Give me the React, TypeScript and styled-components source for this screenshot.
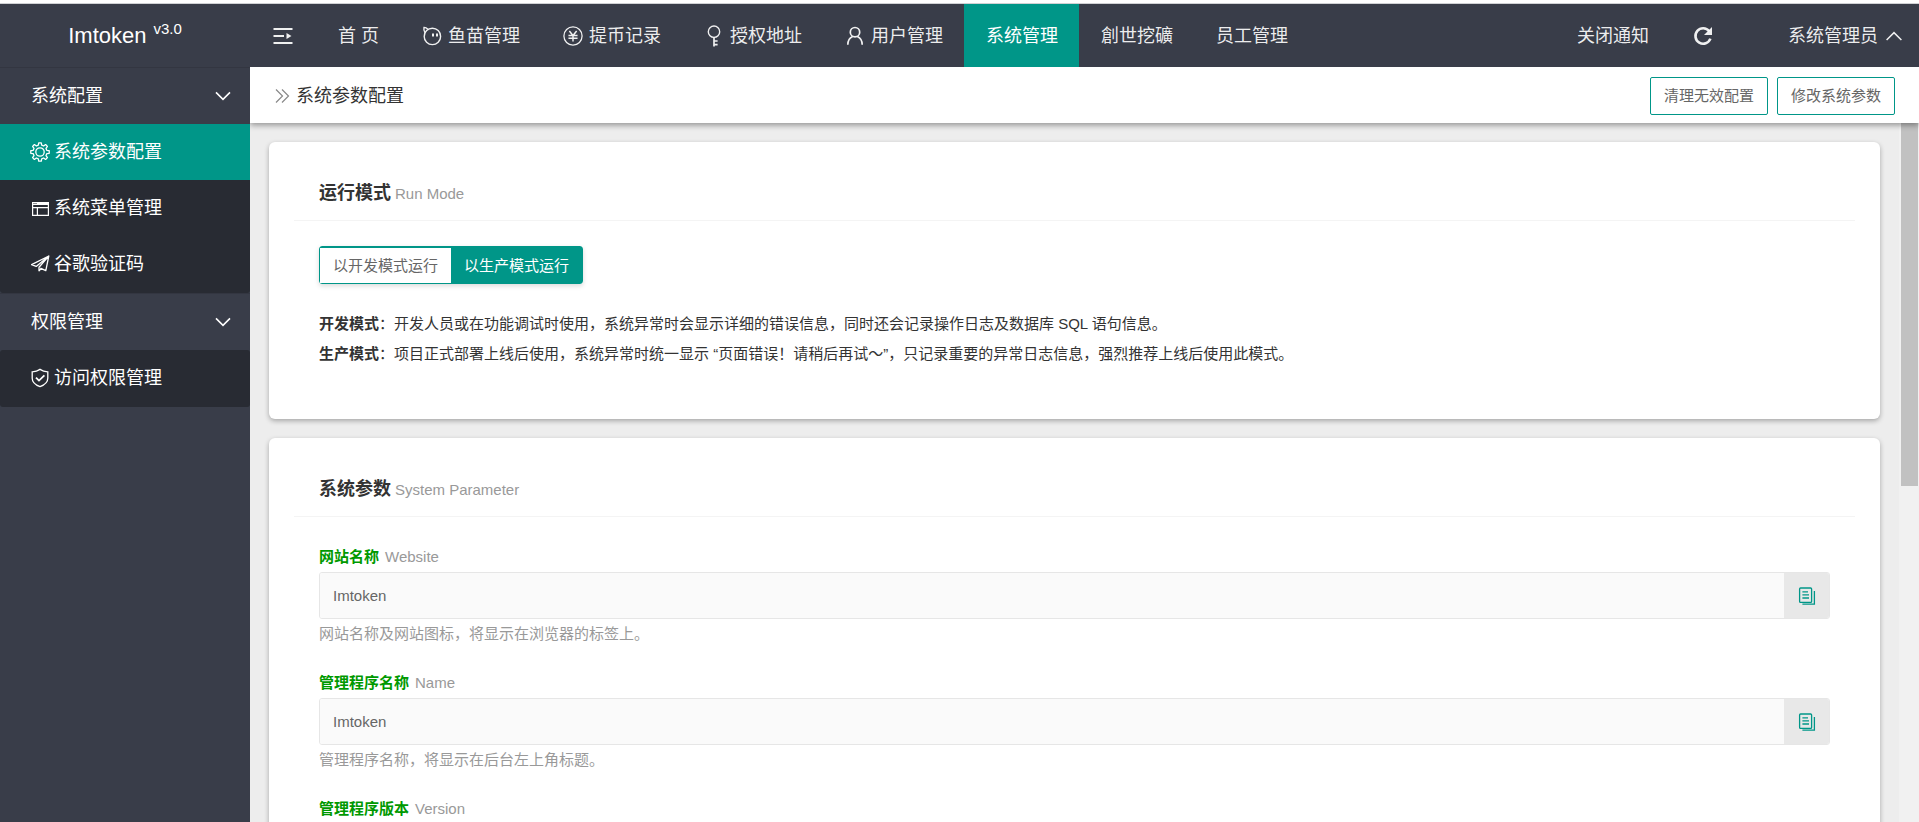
import React from "react";
import styled, { createGlobalStyle, css } from "styled-components";

const color = {
  dark: "#393d49",
  darker: "#282b33",
  teal: "#009688",
  green: "#009900",
  muted: "#999",
};

const GlobalStyle = createGlobalStyle`
  *, *::before, *::after { box-sizing: border-box; }
  body {
    margin: 0;
    font: 15px/30px "Liberation Sans", "Noto Sans CJK SC", sans-serif;
    color: #333;
    background: #fff;
  }
  h1, h2, p { margin: 0; font-weight: 400; }
  a { color: inherit; text-decoration: none; }
  button, input { font: inherit; color: inherit; margin: 0; }
  button { cursor: pointer; }
`;

const Shell = styled.div`
  height: 100vh;
  padding-top: 3px;
  display: flex;
  flex-direction: column;
  overflow: hidden;
`;

const Header = styled.header`
  flex: none;
  height: 64px;
  display: flex;
  border-top: 1px solid #d0d1d4;
  background: ${color.dark};
  color: rgba(255, 255, 255, 0.92);
  font-size: 18px;
`;

const Brand = styled.a`
  flex: none;
  width: 250px;
  display: flex;
  justify-content: center;
  align-items: center;
  gap: 7px;
  color: #fff;
  font-size: 22px;
`;

const Version = styled.sup`
  font-size: 15px;
  line-height: 20px;
  padding-bottom: 14px;
`;

const Nav = styled.nav`
  flex: 1;
  display: flex;
`;

const NavSide = styled.div`
  display: flex;
  align-items: stretch;
`;

const navItem = css`
  display: flex;
  align-items: center;
  gap: 6px;
  padding: 0 21px 0 22px;
  white-space: nowrap;
`;

const NavLink = styled.a<{ $active?: boolean }>`
  ${navItem}
  ${(p) => p.$active && css`background: ${color.teal}; color: #fff;`}
`;

const NavButton = styled.button`
  ${navItem}
  padding: 0 23px;
  border: 0;
  background: none;
`;

const UserButton = styled(NavButton)`
  gap: 8px;
  padding: 0 17px 0 52px;
`;

const IconSlot = styled.span`
  flex: none;
  width: 20px;
  height: 20px;
  display: flex;
  align-items: center;
  justify-content: center;
`;

const Body = styled.div`
  flex: 1;
  min-height: 0;
  display: flex;
`;

const Sidebar = styled.aside`
  flex: none;
  width: 250px;
  background: ${color.dark};
  color: #fff;
  font-size: 18px;
`;

const GroupButton = styled.button`
  width: 100%;
  height: 57px;
  display: flex;
  align-items: center;
  justify-content: space-between;
  padding: 0 19px 0 31px;
  border: 0;
  border-top: 1px solid #333641;
  background: none;
`;

const SubMenu = styled.nav`
  padding-bottom: 1px;
  background: ${color.darker};
  border-radius: 3px;
`;

const SubLink = styled.a<{ $active?: boolean }>`
  height: 56px;
  display: flex;
  align-items: center;
  gap: 4px;
  padding-left: 30px;
  background: ${(p) => (p.$active ? color.teal : "transparent")};
`;

const Main = styled.main`
  flex: 1;
  min-width: 0;
  display: flex;
  flex-direction: column;
`;

const TitleBar = styled.div`
  flex: none;
  position: relative;
  z-index: 1;
  height: 56px;
  display: flex;
  align-items: center;
  gap: 6px;
  padding: 2px 24px 0 25px;
  background: #fff;
  box-shadow: 0 2px 6px rgba(0, 0, 0, 0.4);
  clip-path: inset(0 0 -12px 0);
`;

const PageTitle = styled.h1`
  flex: 1;
  font-size: 18px;
`;

const Actions = styled.div`
  display: flex;
  gap: 9px;
`;

const OutlineButton = styled.button`
  height: 38px;
  padding: 0 13px;
  border: 1px solid ${color.teal};
  border-radius: 2px;
  background: #fff;
  color: #666;
`;

const ScrollArea = styled.div`
  flex: 1;
  min-height: 0;
  display: flex;
  background: #ededed;
`;

const Content = styled.div`
  flex: 1;
  min-width: 0;
  overflow: hidden;
  padding: 19px;
  display: flex;
  flex-direction: column;
  gap: 19px;
`;

const ScrollTrack = styled.div`
  flex: none;
  width: 20px;
  padding: 0 1px 0 2px;
  background: #f1f1f1;
`;

const ScrollThumb = styled.div`
  height: 52%;
  background: #c1c1c1;
`;

const Card = styled.section`
  flex: none;
  padding: 25px;
  border-radius: 6px;
  background: #fff;
  box-shadow: 0 2px 5px rgba(0, 0, 0, 0.3);
`;

const CardHead = styled.div`
  display: flex;
  align-items: baseline;
  gap: 4px;
  padding: 11px 25px;
  border-bottom: 1px solid #f4f4f4;
`;

const CardTitle = styled.h2`
  font-size: 18px;
  font-weight: 700;
`;

const Muted = styled.span`
  color: ${color.muted};
`;

const CardBody = styled.div`
  padding: 25px;
`;

const ModeGroup = styled.div`
  width: max-content;
  display: flex;
  margin-bottom: 25px;
  border: 1px solid ${color.teal};
  border-radius: 3px;
  box-shadow: 0 2px 5px rgba(0, 0, 0, 0.15);
`;

const ModeButton = styled.button<{ $active?: boolean }>`
  height: 36px;
  padding: 0 13px;
  border: 0;
  border-top: 1px solid ${color.teal};
  background: ${(p) => (p.$active ? color.teal : "#fff")};
  color: ${(p) => (p.$active ? "#fff" : "#666")};
`;

const Field = styled.div`
  display: flex;
  flex-direction: column;
  margin-bottom: 19px;
`;

const FieldLabel = styled.label`
  display: flex;
  gap: 6px;
  padding: 4px 0;
  line-height: 22px;
`;

const FieldName = styled.b`
  color: ${color.green};
`;

const InputRow = styled.div`
  height: 47px;
  display: flex;
  border: 1px solid #e6e6e6;
  border-radius: 3px;
  overflow: hidden;
`;

const TextInput = styled.input`
  flex: 1;
  min-width: 0;
  padding: 0 13px;
  border: 0;
  background: #fafafa;
  color: #666;
`;

const CopyButton = styled.button`
  width: 45px;
  display: flex;
  align-items: center;
  justify-content: center;
  padding: 0;
  border: 0;
  background: #e8e8e8;
  color: ${color.teal};
`;

const Help = styled.p`
  color: ${color.muted};
`;

type IconProps = { w?: number; h?: number; sw?: number; children: React.ReactNode };
const Icon = ({ w = 20, h = 20, sw = 1.4, children }: IconProps) => (
  <svg width={w} height={h} viewBox={`0 0 ${w} ${h}`} fill="none" stroke="currentColor" strokeWidth={sw} aria-hidden="true">
    {children}
  </svg>
);

const MenuIcon = () => (
  <Icon sw={2}>
    <path d="M0.5 3h19M0.5 10h10.5M0.5 17h19" />
    <path d="M13.5 7l5 3-5 3z" fill="currentColor" stroke="none" />
  </Icon>
);
const FishIcon = () => (
  <Icon sw={1.4}>
    <path d="M3 6.6C1.8 5 1.6 3.4 2 1.4c1.6.1 2.8.7 4 1.8" />
    <circle cx="10.4" cy="10.4" r="8.2" />
    <path d="M11 7.4v3.2M15 7.4v3.2" strokeWidth="2" />
  </Icon>
);
const YenIcon = () => (
  <Icon w={22} h={22}>
    <circle cx="11" cy="11" r="10" />
    <path d="M7 5.5l4 5 4-5M6 10.5h10M6 13.5h10M11 10.5V17" strokeWidth="1.6" />
  </Icon>
);
const KeyIcon = () => (
  <Icon h={22}>
    <circle cx="10" cy="6.7" r="5.7" />
    <path d="M10 12.4v9.1M10 16h3.6M10 19.6h3.6" strokeWidth="1.7" />
  </Icon>
);
const UserIcon = () => (
  <Icon sw={1.7}>
    <circle cx="10" cy="6.2" r="4.7" />
    <path d="M2.8 18.8c0-4 1.5-6.8 4.8-8.3M17.2 18.8c0-4-1.5-6.8-4.8-8.3" />
  </Icon>
);
const RefreshIcon = () => (
  <Icon sw={2.6}>
    <path d="M16.2 5.2A7.7 7.7 0 1 0 17.4 12.6" />
    <path d="M19 1v8h-8z" fill="currentColor" stroke="none" />
  </Icon>
);
const ChevronUp = () => (
  <Icon w={16} h={10} sw={1.5}><path d="M0.6 9L8 1.6 15.4 9" /></Icon>
);
const ChevronDown = () => (
  <Icon w={16} h={10} sw={1.6}><path d="M1 1.4L8 8.4 15 1.4" /></Icon>
);
const DoubleRight = () => (
  <Icon w={15} h={16} sw={1.2}><path d="M1 1.5L7.5 8 1 14.5M7 1.5L13.5 8 7 14.5" stroke="#888" /></Icon>
);

// Outline of an eight-toothed gear: two outer and two inner points per tooth.
const gearPoints = Array.from({ length: 8 }, (_, tooth) =>
  [[-14, 7], [-8, 9.3], [8, 9.3], [14, 7]].map(([deg, r]) => {
    const a = ((tooth * 45 + deg) * Math.PI) / 180;
    return `${(10 + r * Math.sin(a)).toFixed(2)},${(10 - r * Math.cos(a)).toFixed(2)}`;
  }).join(" ")
).join(" ");

const GearIcon = () => (
  <Icon sw={1.3}>
    <polygon points={gearPoints} strokeLinejoin="round" />
    <circle cx="10" cy="10" r="4.2" />
  </Icon>
);
const WindowIcon = () => (
  <Icon sw={1.2}>
    <path d="M2.6 4.6h15.8v12.8H2.6zM2.6 9.6h15.8M7.4 9.6v8" />
    <path d="M2 4h17v3H2z" fill="currentColor" stroke="none" />
    <path d="M3.5 5.5h4" stroke={color.darker} strokeDasharray="1 1" />
  </Icon>
);
const PlaneIcon = () => (
  <Icon sw={1.3}>
    <path d="M18.8 2L1.6 10.6l4.6 1.8L18.8 2l-3 14.6-5.4-2.4M9 17.2v-4L18.8 2M9 17.2l2-2.8" strokeLinejoin="round" />
  </Icon>
);
const ShieldIcon = () => (
  <Icon sw={1.3}>
    <path d="M10 1.4c2.6 1.8 5 2.3 7.8 2.4v6.4c0 4-3 6.6-7.8 8.4-4.8-1.8-7.8-4.4-7.8-8.4V3.8C5 3.7 7.4 3.2 10 1.4z" />
    <path d="M6 9.6l3 3 5.4-5.2" strokeWidth="1.8" />
  </Icon>
);
const CopyIcon = () => (
  <Icon w={18} h={18} sw={1.3}>
    <rect x="1.6" y="1" width="12" height="14.4" rx="1" />
    <path d="M16.4 4v13.2H4.4M4.4 4.8h5.6M4.4 7.9h6.6M4.4 11h6.6" />
  </Icon>
);

const navLinks = [
  { label: "首 页" },
  { label: "鱼苗管理", icon: <FishIcon /> },
  { label: "提币记录", icon: <YenIcon /> },
  { label: "授权地址", icon: <KeyIcon /> },
  { label: "用户管理", icon: <UserIcon /> },
  { label: "系统管理", active: true },
  { label: "創世挖礦" },
  { label: "员工管理" },
];

const groups = [
  {
    title: "系统配置",
    links: [
      { label: "系统参数配置", icon: <GearIcon />, active: true },
      { label: "系统菜单管理", icon: <WindowIcon /> },
      { label: "谷歌验证码", icon: <PlaneIcon /> },
    ],
  },
  { title: "权限管理", links: [{ label: "访问权限管理", icon: <ShieldIcon />, active: false }] },
];

const fields = [
  { id: "website", name: "网站名称", en: "Website", value: "Imtoken", help: "网站名称及网站图标，将显示在浏览器的标签上。" },
  { id: "name", name: "管理程序名称", en: "Name", value: "Imtoken", help: "管理程序名称，将显示在后台左上角标题。" },
  { id: "version", name: "管理程序版本", en: "Version", value: "", help: "" },
];

export default function App() {
  return (
    <>
      <GlobalStyle />
      <Shell>
        <Header>
          <Brand href="#">
            Imtoken<Version>v3.0</Version>
          </Brand>
          <Nav>
            <NavButton aria-label="折叠菜单"><IconSlot><MenuIcon /></IconSlot></NavButton>
            {navLinks.map((l) => (
              <NavLink key={l.label} href="#" $active={l.active}>
                {l.icon && <IconSlot>{l.icon}</IconSlot>}
                {l.label}
              </NavLink>
            ))}
          </Nav>
          <NavSide>
            <NavLink href="#">关闭通知</NavLink>
            <NavButton aria-label="刷新"><IconSlot><RefreshIcon /></IconSlot></NavButton>
            <UserButton>系统管理员<ChevronUp /></UserButton>
          </NavSide>
        </Header>
        <Body>
          <Sidebar>
            {groups.map((g) => (
              <React.Fragment key={g.title}>
                <GroupButton>{g.title}<ChevronDown /></GroupButton>
                <SubMenu>
                  {g.links.map((l) => (
                    <SubLink key={l.label} href="#" $active={l.active}>
                      <IconSlot>{l.icon}</IconSlot>
                      {l.label}
                    </SubLink>
                  ))}
                </SubMenu>
              </React.Fragment>
            ))}
          </Sidebar>
          <Main>
            <TitleBar>
              <DoubleRight />
              <PageTitle>系统参数配置</PageTitle>
              <Actions>
                <OutlineButton>清理无效配置</OutlineButton>
                <OutlineButton>修改系统参数</OutlineButton>
              </Actions>
            </TitleBar>
            <ScrollArea>
              <Content>
                <Card>
                  <CardHead>
                    <CardTitle>运行模式</CardTitle>
                    <Muted>Run Mode</Muted>
                  </CardHead>
                  <CardBody>
                    <ModeGroup>
                      <ModeButton>以开发模式运行</ModeButton>
                      <ModeButton $active>以生产模式运行</ModeButton>
                    </ModeGroup>
                    <p><b>开发模式</b>：开发人员或在功能调试时使用，系统异常时会显示详细的错误信息，同时还会记录操作日志及数据库 SQL 语句信息。</p>
                    <p><b>生产模式</b>：项目正式部署上线后使用，系统异常时统一显示 “页面错误！请稍后再试～”，只记录重要的异常日志信息，强烈推荐上线后使用此模式。</p>
                  </CardBody>
                </Card>
                <Card>
                  <CardHead>
                    <CardTitle>系统参数</CardTitle>
                    <Muted>System Parameter</Muted>
                  </CardHead>
                  <CardBody>
                    {fields.map((f) => (
                      <Field key={f.id}>
                        <FieldLabel htmlFor={f.id}>
                          <FieldName>{f.name}</FieldName>
                          <Muted>{f.en}</Muted>
                        </FieldLabel>
                        <InputRow>
                          <TextInput id={f.id} defaultValue={f.value} readOnly />
                          <CopyButton aria-label={`复制${f.name}`}><CopyIcon /></CopyButton>
                        </InputRow>
                        {f.help && <Help>{f.help}</Help>}
                      </Field>
                    ))}
                  </CardBody>
                </Card>
              </Content>
              <ScrollTrack><ScrollThumb /></ScrollTrack>
            </ScrollArea>
          </Main>
        </Body>
      </Shell>
    </>
  );
}
